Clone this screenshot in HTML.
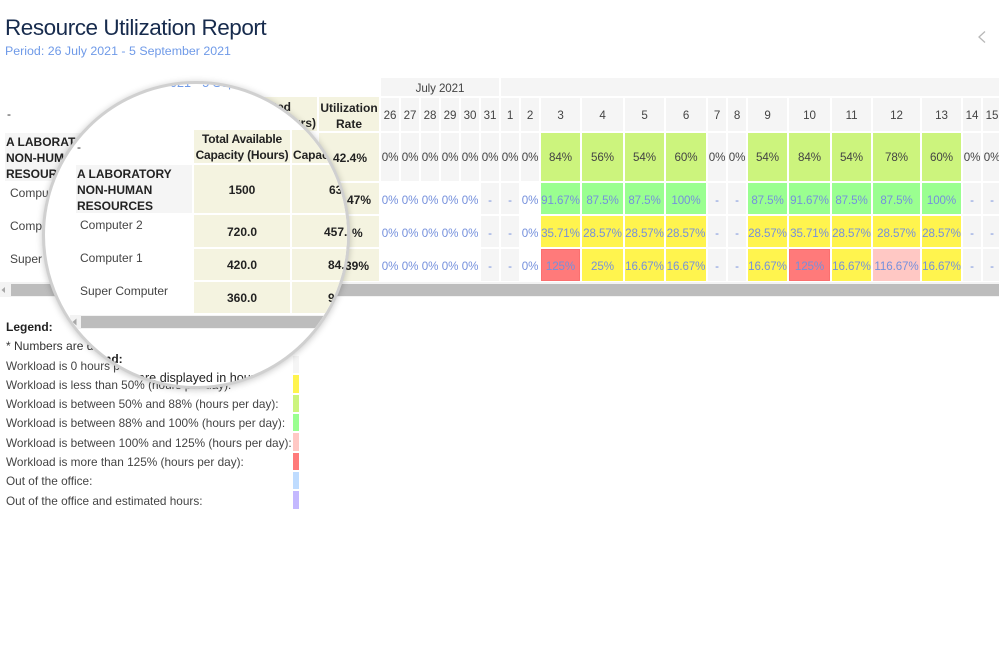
<!DOCTYPE html>
<html lang="en">
<head>
<meta charset="utf-8">
<title>Resource Utilization Report</title>
<style>
html,body{margin:0;padding:0;background:#fff}
body{width:999px;height:645px;position:relative;overflow:hidden;font-family:"Liberation Sans",sans-serif;font-size:12px;color:#333}
.a{position:absolute;white-space:nowrap}
.bg{position:absolute}
#grid{position:absolute;left:381px;top:78px;display:grid;gap:2px;grid-template-columns:18px 18px 18px 18px 18px 18px 18px 18px 39px 41px 39px 40px 18px 18px 39px 41px 39px 47px 39px 18px 18px;grid-template-rows:18px 33px 48px 31px 31px 32px}
#grid div{display:flex;align-items:center;justify-content:center;white-space:nowrap;font-size:11.6px;letter-spacing:-.1px;color:#444;min-width:0;box-sizing:border-box}
#grid .g{background:#f5f5f5}
#grid .l{background:#ccf47d}
#grid .n{background:#9aff90}
#grid .y{background:#fff44e}
#grid .p{background:#ffc8c4}
#grid .r{background:#ff7a7a;box-shadow:inset 0 0 0 1px #fb6f6f}
#grid .w{background:#fff}
#grid .t{color:#7590dc;padding-top:3px}
#grid .m{padding-top:2px}
.beige{background:#f4f3e0}
.bd{font-weight:bold;color:#222}
.lg{left:6px;font-size:11.8px;color:#444;line-height:14px}
.sw{position:absolute;left:293px;width:6px}
#lens{position:absolute;left:42px;top:81px;width:308px;height:308px;box-sizing:border-box;border:3px solid #d0d0d0;border-radius:50%;overflow:hidden;background:#fff;box-shadow:0 1px 7px rgba(0,0,0,.22)}
#in{position:absolute;left:-45px;top:-84px;width:999px;height:645px;font-size:12px}
.c{text-align:center;line-height:16px}
</style>
</head>
<body>
<div class="a" style="left:5px;top:14px;font-size:22.5px;letter-spacing:-.47px;line-height:28px;color:#172b4d">Resource Utilization Report</div>
<div class="a" style="left:5px;top:43px;font-size:12.4px;line-height:16px;color:#6f9ae8">Period: 26 July 2021 - 5 September 2021</div>
<svg style="position:absolute;left:974px;top:28px" width="16" height="18" viewBox="0 0 16 18"><path d="M11 3.500L5 9L11 14.500" fill="none" stroke="#b8b8b8" stroke-width="1.300"/></svg>

<div class="a" style="left:7px;top:107px;line-height:14px">-</div>
<div class="bg" style="left:5px;top:133px;width:260px;height:48px;background:#f5f5f5"></div>
<div class="a bd" style="left:6px;top:134px;line-height:16px">A LABORATORY<br>NON-HUMAN<br>RESOURCES</div>
<div class="a" style="left:10px;top:185px;color:#444;line-height:16px">Computer 2</div>
<div class="a" style="left:10px;top:218px;color:#444;line-height:16px">Computer 1</div>
<div class="a" style="left:10px;top:251px;color:#444;line-height:16px">Super Computer</div>

<div class="bg beige" style="left:222px;top:97px;width:95px;height:34px"></div>
<div class="a bd" style="left:221px;width:70px;top:99px;line-height:16px;text-align:right">Estimated</div>
<div class="a bd" style="left:250px;width:66px;top:115px;line-height:16px;text-align:right">Hours)</div>
<div class="bg beige" style="left:319px;top:97px;width:60px;height:34px"></div>
<div class="a bd c" style="left:319px;top:100px;width:60px">Utilization<br>Rate</div>
<div class="bg beige" style="left:319px;top:133px;width:60px;height:48px"></div>
<div class="bg beige" style="left:319px;top:183px;width:60px;height:31px"></div>
<div class="bg beige" style="left:319px;top:216px;width:60px;height:31px"></div>
<div class="bg beige" style="left:319px;top:249px;width:60px;height:32px"></div>
<div class="a bd" style="left:333px;top:150px;line-height:16px">42.4%</div>
<div class="a bd" style="left:347px;top:192px;line-height:16px">47%</div>
<div class="a bd" style="left:352px;top:225px;line-height:16px">%</div>
<div class="a bd" style="left:345px;top:258px;line-height:16px">39%</div>

<div id="grid">
<div class="g m" style="grid-column:1/7;">July 2021</div><div class="g" style="grid-column:7/22"></div>

<div class="g m">26</div><div class="g m">27</div><div class="g m">28</div><div class="g m">29</div><div class="g m">30</div><div class="g m">31</div><div class="g m">1</div><div class="g m">2</div><div class="g m">3</div><div class="g m">4</div><div class="g m">5</div><div class="g m">6</div><div class="g m">7</div><div class="g m">8</div><div class="g m">9</div><div class="g m">10</div><div class="g m">11</div><div class="g m">12</div><div class="g m">13</div><div class="g m">14</div><div class="g m">15</div>

<div class="g">0%</div><div class="g">0%</div><div class="g">0%</div><div class="g">0%</div><div class="g">0%</div><div class="g">0%</div><div class="g">0%</div><div class="g">0%</div><div class="l">84%</div><div class="l">56%</div><div class="l">54%</div><div class="l">60%</div><div class="g">0%</div><div class="g">0%</div><div class="l">54%</div><div class="l">84%</div><div class="l">54%</div><div class="l">78%</div><div class="l">60%</div><div class="g">0%</div><div class="g">0%</div>

<div class="w t">0%</div><div class="w t">0%</div><div class="w t">0%</div><div class="w t">0%</div><div class="w t">0%</div><div class="g t">-</div><div class="g t">-</div><div class="w t">0%</div><div class="n t">91.67%</div><div class="n t">87.5%</div><div class="n t">87.5%</div><div class="n t">100%</div><div class="g t">-</div><div class="g t">-</div><div class="n t">87.5%</div><div class="n t">91.67%</div><div class="n t">87.5%</div><div class="n t">87.5%</div><div class="n t">100%</div><div class="g t">-</div><div class="g t">-</div>

<div class="w t">0%</div><div class="w t">0%</div><div class="w t">0%</div><div class="w t">0%</div><div class="w t">0%</div><div class="g t">-</div><div class="g t">-</div><div class="w t">0%</div><div class="y t">35.71%</div><div class="y t">28.57%</div><div class="y t">28.57%</div><div class="y t">28.57%</div><div class="g t">-</div><div class="g t">-</div><div class="y t">28.57%</div><div class="y t">35.71%</div><div class="y t">28.57%</div><div class="y t">28.57%</div><div class="y t">28.57%</div><div class="g t">-</div><div class="g t">-</div>

<div class="w t">0%</div><div class="w t">0%</div><div class="w t">0%</div><div class="w t">0%</div><div class="w t">0%</div><div class="g t">-</div><div class="g t">-</div><div class="w t">0%</div><div class="r t">125%</div><div class="y t">25%</div><div class="y t">16.67%</div><div class="y t">16.67%</div><div class="g t">-</div><div class="g t">-</div><div class="y t">16.67%</div><div class="r t">125%</div><div class="y t">16.67%</div><div class="p t">116.67%</div><div class="y t">16.67%</div><div class="g t">-</div><div class="g t">-</div>
</div>

<div class="bg" style="left:0;top:282px;width:999px;height:15px;background:#f3f3f3"></div>
<div class="bg" style="left:11px;top:284px;width:988px;height:12px;background:#bdbdbd"></div>
<svg style="position:absolute;left:0;top:285px" width="10" height="10"><path d="M5 2L1.500 5L5 8Z" fill="#a8a8a8"/></svg>

<div class="a bd" style="left:6px;top:320px;line-height:14px">Legend:</div>
<div class="a" style="left:6px;top:339px;line-height:14px;color:#333">* Numbers are displayed in hours.</div>
<div class="a lg" style="top:359px">Workload is 0 hours per day (hours per day):</div>
<div class="a lg" style="top:378px">Workload is less than 50% (hours per day):</div>
<div class="a lg" style="top:397px">Workload is between 50% and 88% (hours per day):</div>
<div class="a lg" style="top:416px">Workload is between 88% and 100% (hours per day):</div>
<div class="a lg" style="top:436px">Workload is between 100% and 125% (hours per day):</div>
<div class="a lg" style="top:455px">Workload is more than 125% (hours per day):</div>
<div class="a lg" style="top:474px">Out of the office:</div>
<div class="a lg" style="top:494px">Out of the office and estimated hours:</div>
<div class="sw" style="top:356px;height:17px;background:#f5f5f5"></div>
<div class="sw" style="top:375px;height:18px;background:#fff44e"></div>
<div class="sw" style="top:395px;height:17px;background:#ccf47d"></div>
<div class="sw" style="top:414px;height:17px;background:#9aff90"></div>
<div class="sw" style="top:433px;height:18px;background:#ffc8c4"></div>
<div class="sw" style="top:453px;height:17px;background:#ff7a7a"></div>
<div class="sw" style="top:472px;height:17px;background:#bfdcff"></div>
<div class="sw" style="top:491px;height:18px;background:#c4b8ff"></div>

<div id="lens"><div id="in">
<div class="a" style="left:170px;top:75px;font-size:12.6px;line-height:16px;color:#6f9ae8">021 - 5 Sep</div>
<div class="a" style="left:77px;top:140px;line-height:14px">-</div>
<div class="bg beige" style="left:194px;top:130px;width:96px;height:33px"></div>
<div class="bg beige" style="left:292px;top:130px;width:60px;height:33px"></div>
<div class="a bd c" style="left:194px;top:131px;width:96px;letter-spacing:-.2px">Total Available<br>Capacity (Hours)</div>
<div class="a bd" style="left:293px;top:147px;line-height:16px;letter-spacing:-.1px">Capacity</div>
<div class="bg" style="left:76px;top:165px;width:116px;height:48px;background:#f5f5f5"></div>
<div class="a bd" style="left:77px;top:166px;line-height:16px">A LABORATORY<br>NON-HUMAN<br>RESOURCES</div>
<div class="bg beige" style="left:194px;top:165px;width:96px;height:48px"></div>
<div class="bg beige" style="left:292px;top:165px;width:60px;height:48px"></div>
<div class="bg beige" style="left:194px;top:215px;width:96px;height:32px"></div>
<div class="bg beige" style="left:292px;top:215px;width:60px;height:32px"></div>
<div class="bg beige" style="left:194px;top:249px;width:96px;height:31px"></div>
<div class="bg beige" style="left:292px;top:249px;width:60px;height:31px"></div>
<div class="bg beige" style="left:194px;top:282px;width:96px;height:31px"></div>
<div class="bg beige" style="left:292px;top:282px;width:60px;height:31px"></div>
<div class="a bd c" style="left:194px;top:182px;width:96px">1500</div>
<div class="a bd c" style="left:194px;top:224px;width:96px">720.0</div>
<div class="a bd c" style="left:194px;top:257px;width:96px">420.0</div>
<div class="a bd c" style="left:194px;top:290px;width:96px">360.0</div>
<div class="a bd" style="left:329px;top:182px;line-height:16px">63.47%</div>
<div class="a bd" style="left:324px;top:224px;line-height:16px">457.</div>
<div class="a bd" style="left:328px;top:257px;line-height:16px">84.39%</div>
<div class="a bd" style="left:328px;top:290px;line-height:16px">91%</div>
<div class="a" style="left:80px;top:217px;line-height:16px;color:#444">Computer 2</div>
<div class="a" style="left:80px;top:250px;line-height:16px;color:#444">Computer 1</div>
<div class="a" style="left:80px;top:283px;line-height:16px;color:#444">Super Computer</div>
<div class="bg" style="left:70px;top:315px;width:290px;height:14px;background:#f3f3f3"></div>
<div class="bg" style="left:81px;top:316px;width:280px;height:12px;background:#bdbdbd"></div>
<svg style="position:absolute;left:70px;top:317px" width="10" height="10"><path d="M6.500 1.500L2.500 5L6.500 8.500Z" fill="#a8a8a8"/></svg>
<div class="a bd" style="left:76px;top:351px;line-height:16px">Legend:</div>
<div class="a" style="left:75px;top:370px;line-height:16px;color:#222;font-size:12.6px">* Numbers are displayed in hours.</div>
</div></div>
</body>
</html>
